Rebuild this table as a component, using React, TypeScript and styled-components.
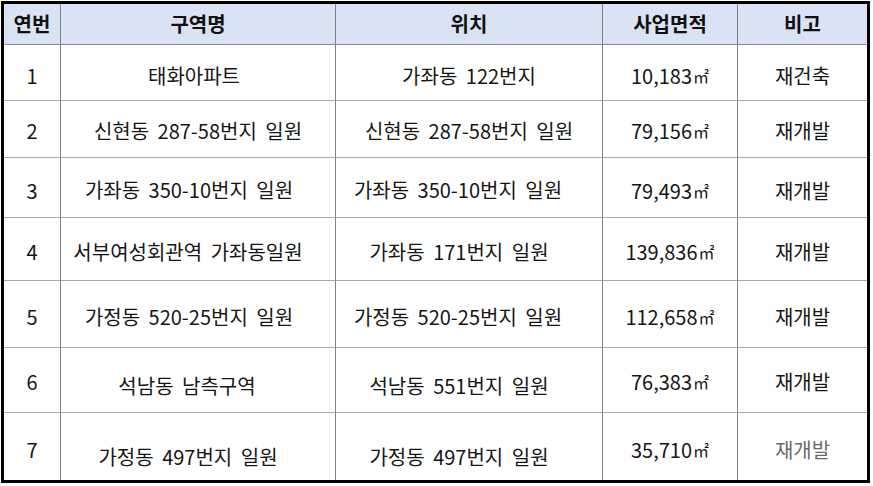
import React from "react";
import styled, { createGlobalStyle } from "styled-components";

const GlobalStyle = createGlobalStyle`
  html, body {
    margin: 0;
    padding: 0;
    background: #ffffff;
  }
  body {
    font-family: "Noto Sans CJK KR", "Noto Sans", sans-serif;
    color: #111;
  }
`;

const Page = styled.div`
  padding: 1px 0 0 1px;
`;

const Table = styled.div`
  width: 863px;
  border: 3px solid #000;
  display: grid;
  grid-template-columns: 57px 275px 267px 135px 129px;
  grid-template-rows: 41px 56px 57px 60px 63px 67px 65px 67px;
`;

const HeadCell = styled.div<{ $last?: boolean }>`
  background: #dae3f3;
  border-right: ${({ $last }) => ($last ? "none" : "1px solid #7f7f7f")};
  border-bottom: 1px solid #8a8a8a;
  display: flex;
  align-items: center;
  justify-content: center;
  font-size: 20px;
  font-weight: 700;
  color: #111;
  line-height: 1;
`;

const Cell = styled.div<{
  $last?: boolean;
  $bottom?: boolean;
  $dy: number;
  $dx?: number;
  $faded?: boolean;
}>`
  border-right: ${({ $last }) => ($last ? "none" : "1px solid #7f7f7f")};
  border-bottom: ${({ $bottom }) => ($bottom ? "none" : "1px solid #a6a6a6")};
  display: flex;
  align-items: center;
  justify-content: center;
  padding-top: ${({ $dy }) => $dy * 2}px;
  padding-right: ${({ $dx = 0 }) => Math.max(0, -$dx * 2)}px;
  font-size: 20px;
  word-spacing: 4px;
  color: ${({ $faded }) => ($faded ? "#6a6a6a" : "#161616")};
  line-height: 1;
  white-space: nowrap;
`;

const Unit = styled.span`
  font-size: 16px;
  margin-left: 1px;
`;

type Row = {
  no: string;
  name: string;
  loc: string;
  area: string;
  note: string;
  dyNo: number;
  dy: number;
  nameDx: number;
  locDx: number;
};

const rows: Row[] = [
  { no: "1", name: "태화아파트", loc: "가좌동 122번지", area: "10,183", note: "재건축", dyNo: 3, dy: 3, nameDx: -4, locDx: 0 },
  { no: "2", name: "신현동 287-58번지 일원", loc: "신현동 287-58번지 일원", area: "79,156", note: "재개발", dyNo: 2, dy: 2, nameDx: 0, locDx: 0 },
  { no: "3", name: "가좌동 350-10번지 일원", loc: "가좌동 350-10번지 일원", area: "79,493", note: "재개발", dyNo: 3, dy: 2, nameDx: -9, locDx: -11 },
  { no: "4", name: "서부여성회관역 가좌동일원", loc: "가좌동 171번지 일원", area: "139,836", note: "재개발", dyNo: 3, dy: 3, nameDx: -10, locDx: -10 },
  { no: "5", name: "가정동 520-25번지 일원", loc: "가정동 520-25번지 일원", area: "112,658", note: "재개발", dyNo: 3, dy: 3, nameDx: -9, locDx: -11 },
  { no: "6", name: "석남동 남측구역", loc: "석남동 551번지 일원", area: "76,383", note: "재개발", dyNo: 2, dy: 6, nameDx: -11, locDx: -10 },
  { no: "7", name: "가정동 497번지 일원", loc: "가정동 497번지 일원", area: "35,710", note: "재개발", dyNo: 3, dy: 10, nameDx: -10, locDx: -10 },
];

const headers = ["연번", "구역명", "위치", "사업면적", "비고"];

export default function App() {
  return (
    <>
      <GlobalStyle />
      <Page>
        <Table>
          {headers.map((h, i) => (
            <HeadCell key={h} $last={i === headers.length - 1}>
              {h}
            </HeadCell>
          ))}
          {rows.map((r, i) => {
            const bottom = i === rows.length - 1;
            return (
              <React.Fragment key={r.no}>
                <Cell $bottom={bottom} $dy={r.dyNo}>{r.no}</Cell>
                <Cell $bottom={bottom} $dy={r.dy} $dx={r.nameDx}>{r.name}</Cell>
                <Cell $bottom={bottom} $dy={r.dy} $dx={r.locDx}>{r.loc}</Cell>
                <Cell $bottom={bottom} $dy={r.dyNo}>
                  {r.area}
                  <Unit>㎡</Unit>
                </Cell>
                <Cell $bottom={bottom} $last $dy={r.dyNo} $faded={bottom}>
                  {r.note}
                </Cell>
              </React.Fragment>
            );
          })}
        </Table>
      </Page>
    </>
  );
}
